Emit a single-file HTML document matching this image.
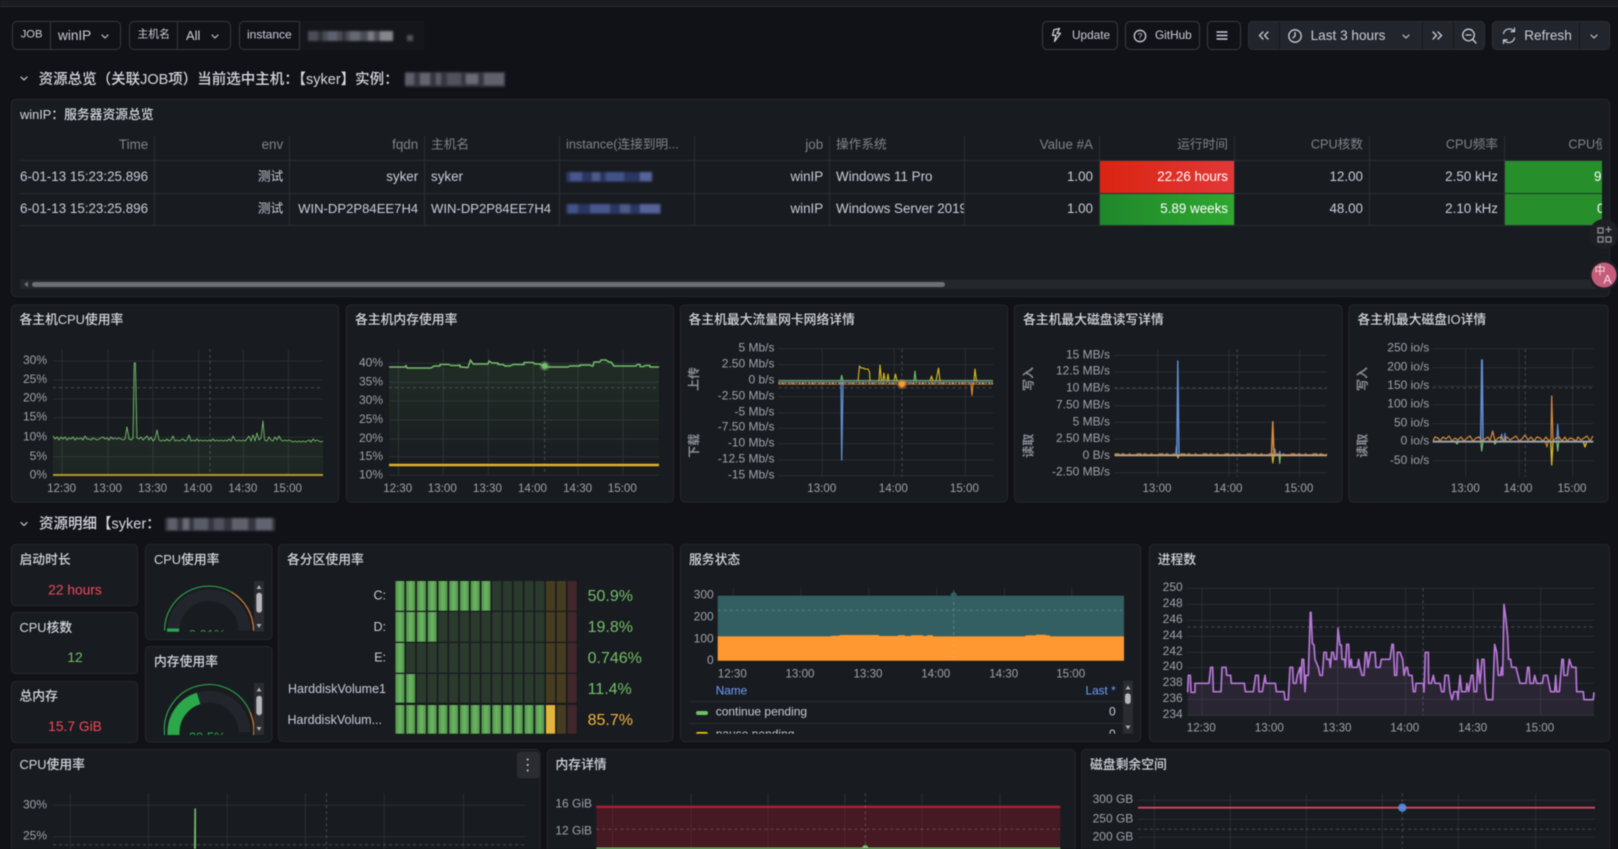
<!DOCTYPE html>
<html lang="zh"><head><meta charset="utf-8"><title>winIP</title>
<style>
html,body{margin:0;padding:0;background:#111217;width:1618px;height:849px;overflow:hidden}
svg{display:block;filter:blur(.4px)}
text{font-family:"Liberation Sans","Noto Sans CJK SC",sans-serif;dominant-baseline:central;fill:#ccccdc}
.ti{font-size:12.8px;font-weight:500;fill:#d8d9e2}
.sec{font-size:14.5px;font-weight:500;fill:#d8d9e2}
.y{font-size:12px;fill:#a2a2ad;text-anchor:end}
.x{font-size:11.6px;fill:#a2a2ad;text-anchor:middle}
.c{font-size:13.4px;fill:#ccccdc}
.cz{font-size:12.7px}
.r{text-anchor:end}
.h{font-size:13.4px;fill:#82838d}
.hz{font-size:12.7px}
.rot{font-size:12px;font-weight:700;fill:#8b8b96;text-anchor:middle}
.p{fill:#181b1f;stroke:#25272d;stroke-width:1}
.g{fill:none;stroke:rgba(204,204,220,.11);stroke-width:1}
.d{fill:none;stroke:rgba(204,204,220,.26);stroke-width:1;stroke-dasharray:3 3}
.l{fill:none;stroke-linejoin:round}
.ic{fill:none;stroke:#ccccdc;stroke-width:1.3;stroke-linecap:round;stroke-linejoin:round}
.bar{font-size:12.5px;fill:#ccccdc;text-anchor:end}
.val{font-size:16px;fill:#73bf69}
</style></head><body>
<svg width="1618" height="849" viewBox="0 0 1618 849" xmlns="http://www.w3.org/2000/svg">
<defs>
<filter id="bl" x="-5%" y="-30%" width="110%" height="160%"><feGaussianBlur stdDeviation="1"/></filter>
<linearGradient id="red" x1="0" x2="1"><stop offset="0" stop-color="#db2412"/><stop offset="1" stop-color="#e23838"/></linearGradient>
<linearGradient id="grn" x1="0" x2="1"><stop offset="0" stop-color="#1f872c"/><stop offset="1" stop-color="#2fa730"/></linearGradient>
<linearGradient id="seg" x1="0" x2="1"><stop offset="0" stop-color="#4d9247"/><stop offset=".5" stop-color="#6db564"/><stop offset="1" stop-color="#4d9247"/></linearGradient>
<linearGradient id="fa" x1="0" x2="0" y1="0" y2="1"><stop offset="0" stop-color="#73bf69" stop-opacity=".1"/><stop offset="1" stop-color="#73bf69" stop-opacity=".07"/></linearGradient>
<linearGradient id="fb" x1="0" x2="0" y1="0" y2="1"><stop offset="0" stop-color="#73bf69" stop-opacity=".11"/><stop offset="1" stop-color="#73bf69" stop-opacity="0"/></linearGradient>
<pattern id="lit" patternUnits="userSpaceOnUse" x="395.3" y="0" width="10.76" height="10"><rect width="9.2" height="10" fill="url(#seg)"/></pattern>
<clipPath id="cols">
<rect x="395.3" y="570" width="9.2" height="170" rx="1.5"/><rect x="406.06" y="570" width="9.2" height="170" rx="1.5"/><rect x="416.82" y="570" width="9.2" height="170" rx="1.5"/><rect x="427.58" y="570" width="9.2" height="170" rx="1.5"/><rect x="438.34" y="570" width="9.2" height="170" rx="1.5"/><rect x="449.1" y="570" width="9.2" height="170" rx="1.5"/><rect x="459.86" y="570" width="9.2" height="170" rx="1.5"/><rect x="470.62" y="570" width="9.2" height="170" rx="1.5"/><rect x="481.38" y="570" width="9.2" height="170" rx="1.5"/><rect x="492.14" y="570" width="9.2" height="170" rx="1.5"/><rect x="502.9" y="570" width="9.2" height="170" rx="1.5"/><rect x="513.66" y="570" width="9.2" height="170" rx="1.5"/><rect x="524.42" y="570" width="9.2" height="170" rx="1.5"/><rect x="535.18" y="570" width="9.2" height="170" rx="1.5"/><rect x="545.94" y="570" width="9.2" height="170" rx="1.5"/><rect x="556.7" y="570" width="9.2" height="170" rx="1.5"/><rect x="567.46" y="570" width="9.2" height="170" rx="1.5"/>
</clipPath>
<clipPath id="tb"><rect x="20" y="130" width="1582" height="100"/></clipPath>
<clipPath id="os"><rect x="830" y="160" width="134" height="70"/></clipPath>
<clipPath id="g1"><rect x="155" y="575" width="99" height="56.7"/></clipPath>
<clipPath id="g2"><rect x="155" y="680" width="99" height="55"/></clipPath>
<clipPath id="leg"><rect x="689" y="680" width="434" height="53.6"/></clipPath>
</defs>
<rect width="1618" height="849" fill="#111217"/>
<rect width="1618" height="6" fill="#1a1c22"/><rect y="6" width="1618" height="1" fill="#2b2d33"/>

<!-- variables -->
<rect x="12.5" y="21.5" width="108" height="28" rx="4.5" fill="#111217" stroke="#35373e"/><path d="M50.5 22V49M177.5 22V49M299.5 22V49" stroke="#35373e"/>
<text x="20.7" y="34.6" font-size="11.2" fill="#ccccdc" style="font-weight:500">JOB</text>
<text x="58" y="35.5" font-size="13.6">winIP</text>
<path class="ic" d="M102 35l3 3 3-3" style="stroke-width:1.1"/>
<rect x="129.5" y="21.5" width="101" height="28" rx="4.5" fill="none" stroke="#35373e"/>
<text x="137.5" y="34.6" font-size="10.8">主机名</text>
<text x="186" y="35.5" font-size="13">All</text>
<path class="ic" d="M212 35l3 3 3-3" style="stroke-width:1.1"/>
<rect x="239.5" y="21.5" width="184" height="28" rx="4.5" fill="none" stroke="#35373e"/>
<text x="247" y="34.4" font-size="12">instance</text>
<rect x="300" y="21" width="124" height="29" fill="#14161b"/>
<g filter="url(#bl)"><rect x="308" y="31" width="85" height="10" fill="#4b4d57"/><rect x="318" y="31" width="5" height="10" fill="#2e3039"/><rect x="328" y="31" width="9" height="10" fill="#5d6070"/><rect x="342" y="31" width="4" height="10" fill="#30323b"/><rect x="350" y="31" width="10" height="10" fill="#666873"/><rect x="368" y="31" width="6" height="10" fill="#7a7b82"/><rect x="380" y="31" width="13" height="10" fill="#85868c"/><rect x="407" y="35" width="6" height="6" fill="#50525a"/></g>

<!-- toolbar -->
<rect x="1042.5" y="21.5" width="75" height="28" rx="4.5" fill="none" stroke="#3a3c43"/>
<path class="ic" d="M1059.5 28.5l-5.5 1.2-1.5 5.8 3.4-.3-1.4 6.3 6-8.2-3.6.1z"/>
<text x="1072" y="35" font-size="11.8" style="font-weight:500">Update</text>
<rect x="1125.5" y="21.5" width="74" height="28" rx="4.5" fill="none" stroke="#3a3c43"/>
<circle class="ic" cx="1140" cy="36" r="5.7"/><text x="1140" y="35.8" font-size="8.5" text-anchor="middle">?</text>
<text x="1155" y="35" font-size="11.8" style="font-weight:500">GitHub</text>
<rect x="1207.5" y="21.5" width="33" height="28" rx="4.5" fill="none" stroke="#3a3c43"/>
<path class="ic" d="M1216.5 32H1227.5M1216.5 35.5H1227.5M1216.5 39H1227.5" style="stroke-width:1.5;stroke-linecap:butt"/>
<rect x="1248.5" y="21.5" width="236" height="28" rx="4" fill="#22252b" stroke="#2d2f36"/>
<path d="M1279.5 22V49M1422.5 22V49M1453.5 22V49" stroke="#16181c"/>
<path class="ic" d="M1263 32l-3.5 3.5 3.5 3.5M1268 32l-3.5 3.5 3.5 3.5M1438 32l3.5 3.5-3.5 3.5M1433 32l3.5 3.5-3.5 3.5"/>
<circle class="ic" cx="1295" cy="36" r="6.2"/><path class="ic" d="M1295 32.5V36l-2 1.8"/>
<text x="1310.6" y="35.5" font-size="13.6">Last 3 hours</text>
<path class="ic" d="M1403 35l3 3 3-3" style="stroke-width:1.1"/>
<circle class="ic" cx="1468.5" cy="35" r="5.8"/><path class="ic" d="M1466 35H1471M1472.8 39.5L1476 43"/>
<rect x="1492.5" y="21.5" width="117" height="28" rx="4" fill="#22252b" stroke="#2d2f36"/>
<path d="M1579.5 22V49" stroke="#16181c"/>
<path class="ic" d="M1503.5 33.5a6 6 0 0 1 10.5-2.3M1514.5 38a6 6 0 0 1-10.5 2.3M1514.5 28v3.6h-3.6M1503.5 43.5v-3.6h3.6" style="stroke-width:1.2"/>
<text x="1524.2" y="35.5" font-size="13.6">Refresh</text>
<path class="ic" d="M1591 35l3 3 3-3" style="stroke-width:1.1"/>

<!-- section 1 -->
<path class="ic" d="M21 77l3 3 3-3" style="stroke-width:1.2"/>
<text class="sec" x="38.6" y="79.8">资源总览（关联JOB项）当前选中主机：【syker】实例：</text>
<g filter="url(#bl)"><rect x="405" y="72" width="100" height="15" fill="#34363f"/><rect x="405" y="73" width="9" height="12" fill="#5d5f6a"/><rect x="420" y="73" width="10" height="12" fill="#62646f"/><rect x="436" y="73" width="5" height="12" fill="#595b66"/><rect x="447" y="73" width="14" height="12" fill="#4f515c"/><rect x="466" y="74" width="12" height="10" fill="#696b74"/><rect x="484" y="73" width="20" height="12" fill="#5f616a"/></g>

<!-- table panel -->
<rect class="p" x="11.5" y="99.5" width="1598" height="197" rx="4"/>
<text class="ti" x="20" y="114.5">winIP：服务器资源总览</text>
<g clip-path="url(#tb)">
<rect x="1099.6" y="160.8" width="134.4" height="32.2" fill="url(#red)"/>
<rect x="1099.6" y="193.6" width="134.4" height="31.6" fill="url(#grn)"/>
<rect x="1504.5" y="160.8" width="98" height="32.2" fill="#268f2c"/>
<rect x="1504.5" y="193.6" width="98" height="31.6" fill="#268f2c"/>
<path d="M154.5 136V225M289.5 136V225M424.5 136V225M559.5 136V225M694.5 136V225M829.5 136V225M964.5 136V225M1099.5 136V225M1234.5 136V225M1369.5 136V225M1504.5 136V225M20 160.5H1602M20 193.5H1602M20 225.5H1602" stroke="#2c2e34"/>
<text class="h r" x="148.2" y="144.7">Time</text><text class="h r" x="283.2" y="144.7">env</text><text class="h r" x="418.2" y="144.7">fqdn</text><text class="h hz" x="431" y="144.7">主机名</text><text class="h hz" x="566" y="144.7">instance(连接到明...</text><text class="h r" x="823.2" y="144.7">job</text><text class="h hz" x="836" y="144.7">操作系统</text><text class="h r" x="1093" y="144.7">Value #A</text><text class="h hz r" x="1228" y="144.7">运行时间</text><text class="h hz r" x="1363" y="144.7">CPU核数</text><text class="h hz r" x="1498" y="144.7">CPU频率</text><text class="h hz" x="1568.4" y="144.7">CPU使用率</text>
<text class="c" x="20" y="176.7">6-01-13 15:23:25.896</text><text class="c cz r" x="283.2" y="176.7">测试</text><text class="c r" x="418.2" y="176.7">syker</text><text class="c" x="431" y="176.7">syker</text><text class="c r" x="823.2" y="176.7">winIP</text><text class="c r" x="1093" y="176.7">1.00</text><text class="c r" x="1228" y="176.7" style="fill:#fff">22.26 hours</text><text class="c r" x="1363" y="176.7">12.00</text><text class="c r" x="1498" y="176.7">2.50 kHz</text><text class="c" x="1594" y="176.7" style="fill:#fff">9</text>
<text class="c" x="20" y="208.3">6-01-13 15:23:25.896</text><text class="c cz r" x="283.2" y="208.3">测试</text><text class="c r" x="418.2" y="208.3" style="font-size:13.1px">WIN-DP2P84EE7H4</text><text class="c" x="431" y="208.3" style="font-size:13.1px">WIN-DP2P84EE7H4</text><text class="c r" x="823.2" y="208.3">winIP</text><text class="c r" x="1093" y="208.3">1.00</text><text class="c r" x="1228" y="208.3" style="fill:#fff">5.89 weeks</text><text class="c r" x="1363" y="208.3">48.00</text><text class="c r" x="1498" y="208.3">2.10 kHz</text><text class="c" x="1597" y="208.3" style="fill:#fff">0</text>
<g clip-path="url(#os)"><text class="c" x="836" y="176.7">Windows 11 Pro</text><text class="c" x="836" y="208.3">Windows Server 2019</text></g>
</g>
<g filter="url(#bl)"><rect x="566" y="172" width="86" height="10" fill="#2a3560"/><rect x="570" y="172" width="12" height="9" fill="#46568e"/><rect x="592" y="172" width="8" height="9" fill="#4c5a88"/><rect x="606" y="172" width="18" height="9" fill="#425288"/><rect x="640" y="172" width="12" height="9" fill="#54649a"/>
<rect x="566" y="204" width="95" height="10" fill="#2a3560"/><rect x="568" y="204" width="10" height="9" fill="#425288"/><rect x="590" y="204" width="20" height="9" fill="#46568e"/><rect x="620" y="204" width="10" height="9" fill="#4c5a88"/><rect x="640" y="204" width="20" height="9" fill="#54649a"/></g>
<rect x="20" y="279.5" width="1582" height="9.5" fill="#24272c"/>
<rect x="32" y="282" width="913" height="5" rx="2.5" fill="#6c6f74"/>
<path d="M28 281.5L24 284.3 28 287z" fill="#6c6f74"/>
<circle cx="1604" cy="234" r="15" fill="#1d1f24"/>
<g fill="none" stroke="#8f9199" stroke-width="1.3"><rect x="1598" y="228" width="5" height="5"/><rect x="1598" y="237" width="5" height="5"/><rect x="1606" y="237" width="5" height="5"/><path d="M1608.5 226.5v6M1605.5 229.5h6"/></g>
<circle cx="1604" cy="275" r="15" fill="#1d1f24"/><circle cx="1604" cy="275" r="12.5" fill="#c55c7b"/>
<text x="1600" y="271" font-size="11" text-anchor="middle" style="fill:#f3dfe5">中</text><text x="1607.5" y="279.5" font-size="12" text-anchor="middle" style="fill:#f3dfe5">A</text>

<!-- row of 5 panels -->
<rect class="p" x="11.5" y="305" width="327" height="197" rx="4"/>
<rect class="p" x="346.5" y="305" width="327" height="197" rx="4"/>
<rect class="p" x="680.5" y="305" width="327" height="197" rx="4"/>
<rect class="p" x="1014.5" y="305" width="327.5" height="197" rx="4"/>
<rect class="p" x="1349" y="305" width="259" height="197" rx="4"/>
<text class="ti" x="19.5" y="319.7">各主机CPU使用率</text>
<text class="ti" x="355" y="319.7">各主机内存使用率</text>
<text class="ti" x="688.5" y="319.7">各主机最大流量网卡网络详情</text>
<text class="ti" x="1023" y="319.7">各主机最大磁盘读写详情</text>
<text class="ti" x="1357.5" y="319.7">各主机最大磁盘IO详情</text>

<!-- chart A -->
<path class="g" d="M53 361H323M53 380H323M53 399H323M53 417.7H323M53 437.3H323M53 456.7H323M53 475H323M62 349V475M108 349V475M153 349V475M198.6 349V475M243.3 349V475M288.4 349V475"/>
<path d="M53 437L134 437L134 363H136L137 438L200 440L323 441V475H53Z" fill="url(#fa)"/>
<path class="d" d="M53 387.7H323M210 349V475"/>
<path class="l" stroke="#73bf69" stroke-width=".9" d="M53 436L55 439 57 437 59 440 61 437 63 439 65 437 67 440 69 438 71 439 73 437 75 440 77 438 79 439 81 438 83 440 85 436 87 439 89 439 91 440 93 438 95 439 97 440 99 439 101 438 103 437 105 439 107 438 109 440 111 437 113 439 115 438 117 439 119 438 121 439 123 440 125 439 127 427 129 439 131 440 133 438 134.2 363 135.4 363 137 438 139 439 141 437 143 440 145 438 147 436 149 440 151 437 153 441 155 439 157 430 159 440 161 441 163 440 165 441 167 439 169 441 171 440 173 436 175 441 177 440 179 441 181 440 183 439 185 441 187 440 189 435 191 441 193 440 195 441 197 439 199 441 201 440 203 441 205 440 207 441 209 440 211 441 213 439 215 441 217 440 219 441 221 440 223 441 225 440 227 441 229 439 231 441 233 436 235 440 237 441 239 440 241 441 243 440 245 441 247 439 249 436 251 441 253 435 255 441 257 433 259 440 261 438 263 421 264.5 440 267 441 269 437 271 440 273 441 275 437 277 440 279 436 281 440 283 441 285 440 287 441 289 440 291 441 293 442 295 441 297 442 299 441 301 442 303 441 305 442 307 441 309 440 311 442 313 439 315 441 317 440 319 441 321 442 323 441"/>
<path stroke="#b8982a" stroke-width="2" fill="none" d="M53 475H323"/>
<text class="y" x="47" y="360">30%</text><text class="y" x="47" y="379">25%</text><text class="y" x="47" y="397.7">20%</text><text class="y" x="47" y="416.7">15%</text><text class="y" x="47" y="436.3">10%</text><text class="y" x="47" y="456">5%</text><text class="y" x="47" y="474.7">0%</text>
<text class="x" x="61.6" y="488.3">12:30</text><text class="x" x="107.5" y="488.3">13:00</text><text class="x" x="152.6" y="488.3">13:30</text><text class="x" x="197.7" y="488.3">14:00</text><text class="x" x="242.8" y="488.3">14:30</text><text class="x" x="287.5" y="488.3">15:00</text>

<!-- chart B -->
<path class="g" d="M389 363.3H659M389 382.3H659M389 401H659M389 420H659M389 439H659M389 456.7H659M389 475.3H659M398.5 349V475M443.2 349V475M488.3 349V475M533.4 349V475M578 349V475M623 349V475"/>
<path d="M389 367H470L473 364H600L606 360L614 366H659V475H389Z" fill="url(#fb)"/>
<path class="d" d="M389 387.7H659M544.7 349V475"/>
<path class="l" stroke="#73bf69" stroke-width="1.5" d="M389 367H405L406 365.5 407 368H431L434 366H440V364.5H449L451 365.5H458L460 365V367H463L466 367.5H468L470.5 360 473 364H488L489 361 492 363H498V364.5H503L505 366H510L513 364.5H524V362.5H533L535 364H540L544 367H568L570 366H580V365H590L592 366H593L594 362H600L601 360H606L609 362H611L614 366H636L637 364.5H640V366.5H644L645 365.5H650V367H659"/>
<circle cx="544.7" cy="366" r="5" fill="#73bf69" fill-opacity=".35"/><circle cx="544.7" cy="366" r="3" fill="#73bf69"/>
<path stroke="#dcb52a" stroke-width="2.4" fill="none" d="M389 465H659"/>
<text class="y" x="383" y="362.7">40%</text><text class="y" x="383" y="381.7">35%</text><text class="y" x="383" y="400">30%</text><text class="y" x="383" y="419">25%</text><text class="y" x="383" y="438">20%</text><text class="y" x="383" y="456">15%</text><text class="y" x="383" y="474.7">10%</text>
<text class="x" x="397.7" y="488.3">12:30</text><text class="x" x="442.3" y="488.3">13:00</text><text class="x" x="487.4" y="488.3">13:30</text><text class="x" x="532.5" y="488.3">14:00</text><text class="x" x="577.6" y="488.3">14:30</text><text class="x" x="622.3" y="488.3">15:00</text>

<!-- chart C -->
<path class="g" d="M778.4 348.7H993M778.4 364.7H993M778.4 380.3H993M778.4 396.7H993M778.4 413H993M778.4 428.3H993M778.4 443.7H993M778.4 460H993M778.4 475.7H993M822.2 349.3V476.7M894.2 349.3V476.7M965.3 349.3V476.7"/>
<path class="d" d="M778.4 387.7H993M902 349.3V476.7"/>
<path class="l" stroke="#73bf69" stroke-width="1.2" stroke-opacity=".75" d="M778.4 380.5H993"/>
<path class="l" stroke="#7f9fc0" stroke-width="1" stroke-opacity=".7" d="M778.4 381.8H993"/>
<path class="l" stroke="#d9bd20" stroke-width="1.1" d="M858 381L859.5 366 861 368H864V369H868L869.5 372 870 381M879 381L880 365 881.5 381M883 381L883.8 373 885 380M887 381L888 374 889 381M894 381L895.5 374 897 381M930 381L931.5 376 933 381M936 381L938.5 368 940 381M974 381L975 369 976.5 381"/>
<path class="l" stroke="#73bf69" stroke-width="1.1" d="M914 381L915 371 916 381M840.5 381L841.7 375.3 843 381"/>
<path class="l" stroke="#d98a3c" stroke-width="1.2" stroke-dasharray="2 1 3 1 1 2" d="M778.4 383.4H993"/>
<path class="l" stroke="#c9843c" stroke-width=".7" d="M778.4 384.3H993"/>
<path class="l" stroke="#cccc99" stroke-width=".7" stroke-dasharray="1 2" d="M778.4 382.6H993"/>
<path class="l" stroke="#e08c38" stroke-width="1.1" d="M971 384L972 395.3 973 384"/>
<path class="l" stroke="#5f8fd6" stroke-width="1.3" d="M841 382L841.7 460 843 382"/>
<circle cx="902" cy="384.3" r="5" fill="#ff9830" fill-opacity=".35"/><circle cx="902" cy="384.3" r="3" fill="#ff9830"/>
<text class="y" x="774.5" y="347.7">5 Mb/s</text><text class="y" x="774.5" y="363.3">2.50 Mb/s</text><text class="y" x="774.5" y="379.7">0 b/s</text><text class="y" x="774.5" y="395.7">-2.50 Mb/s</text><text class="y" x="774.5" y="411.7">-5 Mb/s</text><text class="y" x="774.5" y="426.7">-7.50 Mb/s</text><text class="y" x="774.5" y="442.7">-10 Mb/s</text><text class="y" x="774.5" y="458.7">-12.5 Mb/s</text><text class="y" x="774.5" y="474.7">-15 Mb/s</text>
<text class="x" x="821.8" y="488.3">13:00</text><text class="x" x="893.3" y="488.3">14:00</text><text class="x" x="964.4" y="488.3">15:00</text>
<text class="rot" transform="translate(694,379) rotate(-90)">上传</text><text class="rot" transform="translate(694,445.7) rotate(-90)">下载</text>

<!-- chart D -->
<path class="g" d="M1114.5 355.3H1327M1114.5 372H1327M1114.5 388.7H1327M1114.5 405.7H1327M1114.5 422.3H1327M1114.5 439H1327M1114.5 455.3H1327M1114.5 472.7H1327M1157.9 349.3V476.7M1229 349.3V476.7M1299.7 349.3V476.7"/>
<path class="d" d="M1114.5 387.7H1327M1237.2 349.3V476.7"/>
<path class="l" stroke="#5f8fd6" stroke-width="1" d="M1175.5 455L1176.3 446 1177 455"/>
<path class="l" stroke="#5f8fd6" stroke-width="1.4" d="M1176.8 455L1177.8 361 1179 455"/>
<path class="l" stroke="#5f8fd6" stroke-width="1" d="M1274 455L1275 449 1276 455M1279 455L1279.7 451 1280.5 455"/>
<path class="l" stroke="#d9bd20" stroke-width="1.1" d="M1272 455L1272.8 463 1274 455M1177 455L1178 458 1179 455"/>
<path class="l" stroke="#73bf69" stroke-width="1.1" d="M1279 455L1279.7 463.5 1280.5 455"/>
<path class="l" stroke="#d98a3c" stroke-width="1.5" d="M1271.5 455L1272.8 421.7 1274 455"/>
<path class="l" stroke="#c9a27a" stroke-width="2" d="M1114.5 455.3H1327"/>
<path class="l" stroke="#c0843e" stroke-width="1" stroke-dasharray="5 2 3 4 2 6" d="M1114.5 453.8H1327"/>
<text class="y" x="1110" y="354.3">15 MB/s</text><text class="y" x="1110" y="370.7">12.5 MB/s</text><text class="y" x="1110" y="387.7">10 MB/s</text><text class="y" x="1110" y="404.7">7.50 MB/s</text><text class="y" x="1110" y="421.7">5 MB/s</text><text class="y" x="1110" y="438">2.50 MB/s</text><text class="y" x="1110" y="455">0 B/s</text><text class="y" x="1110" y="471.7">-2.50 MB/s</text>
<text class="x" x="1157" y="488.3">13:00</text><text class="x" x="1228" y="488.3">14:00</text><text class="x" x="1298.8" y="488.3">15:00</text>
<text class="rot" transform="translate(1028.6,379) rotate(-90)">写入</text><text class="rot" transform="translate(1028.6,445.7) rotate(-90)">读取</text>

<!-- chart E -->
<path class="g" d="M1432.7 348.7H1593.3M1432.7 367.7H1593.3M1432.7 386H1593.3M1432.7 404.7H1593.3M1432.7 423.7H1593.3M1432.7 441.7H1593.3M1432.7 460.7H1593.3M1465.7 349.3V476.7M1519 349.3V476.7M1572.7 349.3V476.7"/>
<path class="d" d="M1432.7 387.7H1593.3M1525.3 349.3V476.7"/>
<path class="l" stroke="#5f8fd6" stroke-width="1.5" d="M1480.7 441L1481.7 360H1482.2L1483 441"/>
<path class="l" stroke="#5f8fd6" stroke-width="1.2" d="M1500.5 441L1501.7 434 1503 441M1504 441L1505 433.5 1506 441M1556.7 441L1557.7 424.3 1558.8 441"/>
<path class="l" stroke="#73bf69" stroke-width="1.2" d="M1480.7 441L1481.7 451 1483 441M1556.7 441L1557.7 451 1558.8 441M1455 441L1457 444 1459 441M1493 441L1495 444 1497 441"/>
<path class="l" stroke="#d9bd20" stroke-width="1.3" d="M1550.7 441L1551.7 465 1553 441M1583 441L1585 447 1587 441"/>
<path class="l" stroke="#d98a3c" stroke-width="1" d="M1545 441L1547 447 1548 441"/>
<path class="l" stroke="#97a4b2" stroke-width="2" d="M1432.7 441.6H1593.3"/>
<path class="l" stroke="#d98a3c" stroke-width="1.2" d="M1433 441L1435 437 1438 438 1440 441 1443 437 1446 439 1449 436 1452 441 1455 438 1458 440 1461 437 1464 441 1467 438 1470 436 1473 441 1476 438 1479 437 1482 441 1485 439 1488 437 1490 441 1492.7 431 1495 441 1498 438 1501 437 1504 441 1507 437 1510 440 1513 438 1516 436 1519 441 1522 439 1525 435 1528 440 1531 437 1534 441 1537 437 1540 438 1543 441 1546 437 1549 441 1551 439 1551.7 396 1553 441 1556 438 1559 437 1562 441 1565 437 1567 441 1570 438 1573 439 1576 441 1578 437 1581 440 1584 438 1587 436 1590 441 1593 436"/>
<text class="y" x="1429.3" y="347.7">250 io/s</text><text class="y" x="1429.3" y="366.7">200 io/s</text><text class="y" x="1429.3" y="385">150 io/s</text><text class="y" x="1429.3" y="403.7">100 io/s</text><text class="y" x="1429.3" y="422.7">50 io/s</text><text class="y" x="1429.3" y="440.7">0 io/s</text><text class="y" x="1429.3" y="460">-50 io/s</text>
<text class="x" x="1465.3" y="488.3">13:00</text><text class="x" x="1518" y="488.3">14:00</text><text class="x" x="1572" y="488.3">15:00</text>
<text class="rot" transform="translate(1362.7,379) rotate(-90)">写入</text><text class="rot" transform="translate(1362.7,445.7) rotate(-90)">读取</text>

<!-- section 2 -->
<path class="ic" d="M21 522.5l3 3 3-3" style="stroke-width:1.2"/>
<text class="sec" x="39" y="524.5">资源明细【syker：</text>
<g filter="url(#bl)"><rect x="165" y="518" width="110" height="13" fill="#34363f"/><rect x="168" y="518" width="9" height="12" fill="#5d5f6a"/><rect x="183" y="518" width="6" height="12" fill="#696b74"/><rect x="194" y="518" width="14" height="12" fill="#595b66"/><rect x="214" y="518" width="10" height="12" fill="#4f515c"/><rect x="232" y="518" width="16" height="12" fill="#5f616a"/><rect x="256" y="518" width="16" height="12" fill="#62646f"/></g>

<rect class="p" x="11.5" y="544.5" width="126" height="61" rx="4"/>
<rect class="p" x="11.5" y="612.5" width="126" height="61" rx="4"/>
<rect class="p" x="11.5" y="681.5" width="126" height="61" rx="4"/>
<text class="ti" x="19.5" y="559.3">启动时长</text><text x="75" y="589.8" font-size="13.8" text-anchor="middle" style="fill:#f2495c;font-weight:500">22 hours</text>
<text class="ti" x="19.5" y="627.3">CPU核数</text><text x="75" y="657.5" font-size="13.8" text-anchor="middle" style="fill:#73bf69;font-weight:500">12</text>
<text class="ti" x="19.5" y="696">总内存</text><text x="75" y="726.5" font-size="13.8" text-anchor="middle" style="fill:#f2495c;font-weight:500">15.7 GiB</text>

<!-- gauges -->
<rect class="p" x="145.5" y="544.5" width="126.5" height="95" rx="4"/>
<text class="ti" x="154" y="559.3">CPU使用率</text>
<g clip-path="url(#g1)">
<path d="M173.5 630.6A35.5 35.5 0 0 1 244.5 630.6" fill="none" stroke="#22252b" stroke-width="12"/>
<rect x="167" y="628.5" width="12" height="4" fill="#2ba84a"/>
<path d="M164.5 630.6A44.5 44.5 0 0 1 231.25 592" fill="none" stroke="#2f9e4a" stroke-width="1.2"/>
<path d="M231.25 592A44.5 44.5 0 0 1 253.5 630.6" fill="none" stroke="#d9812f" stroke-width="1.2"/>
<text x="207.3" y="634.5" font-size="13" text-anchor="middle" style="fill:#2ba84a">9.91%</text>
</g>
<rect x="254" y="581" width="10" height="50.7" fill="#2a2c30"/>
<rect x="256.3" y="592.7" width="5.7" height="20" rx="2.8" fill="#b5b6ba"/>
<path d="M259 585L256.5 589H261.5ZM259 628L256.5 624H261.5Z" fill="#aaaab0"/>

<rect class="p" x="145.5" y="646.5" width="126.5" height="95.5" rx="4"/>
<text class="ti" x="154" y="661.7">内存使用率</text>
<g clip-path="url(#g2)">
<path d="M173.5 732.3A35.5 35.5 0 0 1 244.5 732.3" fill="none" stroke="#22252b" stroke-width="12"/>
<path d="M173.5 735V732.3A35.5 35.5 0 0 1 198.6 698.4" fill="none" stroke="#2ba84a" stroke-width="12"/>
<path d="M164.5 735V732.3A44.5 44.5 0 0 1 250 712" fill="none" stroke="#2f9e4a" stroke-width="1.2"/>
<path d="M250 712A44.5 44.5 0 0 1 253.5 735" fill="none" stroke="#d9812f" stroke-width="1.2"/>
<text x="207.3" y="737" font-size="13" text-anchor="middle" style="fill:#2ba84a">39.5%</text>
</g>
<rect x="254" y="683" width="10" height="52" fill="#2a2c30"/>
<rect x="256.3" y="695.7" width="5.7" height="19.5" rx="2.8" fill="#b5b6ba"/>
<path d="M259 687.5L256.5 691.5H261.5ZM259 731L256.5 727H261.5Z" fill="#aaaab0"/>

<!-- bar gauge -->
<rect class="p" x="278.5" y="544.5" width="394.5" height="197" rx="4"/>
<text class="ti" x="287" y="559.3">各分区使用率</text>
<g clip-path="url(#cols)">
<g fill="#2a3a2c"><rect x="395" y="581" width="151" height="29.7"/><rect x="395" y="612" width="151" height="29.7"/><rect x="395" y="643" width="151" height="29.7"/><rect x="395" y="674" width="151" height="28.7"/></g>
<g fill="#463c20"><rect x="545.9" y="581" width="21.5" height="29.7"/><rect x="545.9" y="612" width="21.5" height="29.7"/><rect x="545.9" y="643" width="21.5" height="29.7"/><rect x="545.9" y="674" width="21.5" height="28.7"/><rect x="556" y="705" width="11.4" height="28.7"/></g>
<g fill="#41262b"><rect x="567.4" y="581" width="11" height="29.7"/><rect x="567.4" y="612" width="11" height="29.7"/><rect x="567.4" y="643" width="11" height="29.7"/><rect x="567.4" y="674" width="11" height="28.7"/><rect x="567.4" y="705" width="11" height="28.7"/></g>
<g fill="url(#lit)"><rect x="395" y="581" width="96" height="29.7"/><rect x="395" y="612" width="42" height="29.7"/><rect x="395" y="643" width="10" height="29.7"/><rect x="395" y="674" width="21" height="28.7"/><rect x="395" y="705" width="150" height="28.7"/></g>
<rect x="545.9" y="705" width="10" height="28.7" fill="#e3b43a"/>
</g>
<text class="bar" x="386" y="595.7">C:</text><text class="bar" x="386" y="627">D:</text><text class="bar" x="386" y="657.7">E:</text><text class="bar" x="386" y="689">HarddiskVolume1</text><text class="bar" x="382" y="720">HarddiskVolum...</text>
<text class="val" x="587.6" y="596.5">50.9%</text><text class="val" x="587.6" y="627.7">19.8%</text><text class="val" x="587.6" y="658.5">0.746%</text><text class="val" x="587.6" y="689.7">11.4%</text><text class="val" x="587.6" y="720.7" style="fill:#f5b53f">85.7%</text>

<!-- service -->
<rect class="p" x="680.5" y="544.5" width="460" height="197" rx="4"/>
<text class="ti" x="689" y="559.3">服务状态</text>
<path class="g" d="M733.3 588V596M801 588V596M868.7 588V596M936.7 588V596M1004.3 588V596M1071.7 588V596"/>
<rect x="717.7" y="595.7" width="406.3" height="41.5" fill="#335f63"/>
<path d="M717.7 636.4H830L832 635.8H838L841 635H878L880 636H898V635.2H905V636H911V635.2H923V636H927V635.2H933V636.4H1025L1026 635.4H1036V634.8H1046V635.4H1050V636.4H1124V660.7H717.7Z" fill="#ff9830"/>
<path class="d" d="M717.7 610.3H1124M953.7 590V660.7"/>
<circle cx="953.7" cy="595" r="3" fill="#335f63"/>
<text class="y" x="713.7" y="594.5">300</text><text class="y" x="713.7" y="616.7">200</text><text class="y" x="713.7" y="638.3">100</text><text class="y" x="713.7" y="660">0</text>
<text class="x" x="732.3" y="674.2">12:30</text><text class="x" x="800" y="674.2">13:00</text><text class="x" x="868" y="674.2">13:30</text><text class="x" x="935.7" y="674.2">14:00</text><text class="x" x="1003.7" y="674.2">14:30</text><text class="x" x="1070.7" y="674.2">15:00</text>
<g clip-path="url(#leg)">
<text x="715.7" y="690.3" font-size="11.8" style="fill:#6e9fff;font-weight:500">Name</text><text x="1115.7" y="690.3" font-size="11.8" text-anchor="end" style="fill:#6e9fff;font-weight:500">Last *</text>
<path d="M689 701.5H1122.7M689 723.5H1122.7" stroke="#2c2e34"/>
<rect x="696" y="711" width="12" height="4" rx="2" fill="#73bf69"/>
<text x="715.7" y="711.3" font-size="12">continue pending</text><text x="1115.7" y="711.3" font-size="12" text-anchor="end">0</text>
<rect x="696" y="732" width="12" height="4" rx="2" fill="#f2cc0c"/>
<text x="715.7" y="733.8" font-size="12">pause pending</text><text x="1115.7" y="733.8" font-size="12" text-anchor="end">0</text>
</g>
<rect x="1123" y="680.7" width="10" height="53" fill="#2a2c30"/>
<rect x="1125" y="693.3" width="5.7" height="10.7" rx="2.8" fill="#b5b6ba"/>
<path d="M1128 685.5L1125.5 689.5H1130.5ZM1128 729.5L1125.5 725.5H1130.5Z" fill="#aaaab0"/>

<!-- processes -->
<rect class="p" x="1149.5" y="544.5" width="460" height="197" rx="4"/>
<text class="ti" x="1157.7" y="559.3">进程数</text>
<path class="g" d="M1187.3 588.3H1594M1187.3 604.3H1594M1187.3 620.3H1594M1187.3 636.3H1594M1187.3 652.3H1594M1187.3 667.7H1594M1187.3 683.3H1594M1187.3 699.3H1594M1187.3 715.3H1594M1202 588.3V715.3M1270 588.3V715.3M1337.7 588.3V715.3M1405.7 588.3V715.3M1473.3 588.3V715.3M1540.7 588.3V715.3"/>
<g transform="translate(1140,530) scale(.33333)">
<path fill="#b877d9" fill-opacity=".11" d="M143 487L145 436 151 436 153 487 165 487 165 460 207 460 212 412 218 412 220 485 243 485 246 412 258 412 260 436 272 436 274 460 313 460 316 485 340 485 347 436 355 436 357 485 367 485 375 436 378 460 406 460 409 485 432 485 435 509 445 509 450 412 458 412 460 460 468 460 472 436 480 412 483 460 486 388 491 388 495 485 498 436 505 436 511 247 513 247 517 340 522 345 525 388 535 412 540 436 547 436 552 367 559 367 560 388 568 388 571 412 575 367 580 367 584 388 590 388 594 295 600 345 604 345 606 388 614 388 616 412 620 343 626 343 628 412 634 388 636 412 652 412 656 388 660 412 666 436 672 436 676 367 680 367 684 412 692 367 705 367 708 412 720 412 724 388 750 388 756 343 760 343 764 436 770 436 772 367 780 367 788 388 792 436 798 412 802 412 806 436 816 436 820 485 826 485 828 460 850 460 852 485 856 367 865 367 866 460 874 460 880 436 885 460 900 460 905 485 912 485 915 436 925 436 930 485 936 509 942 485 952 485 954 509 960 436 965 485 978 485 981 460 986 485 994 436 999 436 1002 485 1010 485 1013 388 1020 460 1026 388 1032 388 1036 485 1040 509 1058 509 1064 343 1070 367 1075 436 1082 436 1085 412 1088 436 1092 223 1097 260 1103 320 1106 388 1112 388 1115 412 1128 412 1134 436 1140 460 1158 460 1163 412 1167 412 1170 460 1180 460 1184 436 1190 460 1207 460 1211 436 1222 436 1232 485 1244 485 1247 436 1250 485 1258 485 1266 388 1270 388 1272 436 1282 436 1288 388 1296 412 1308 412 1310 485 1330 485 1332 509 1360 509 1362 487V556H143Z"/>
</g>
<path class="d" d="M1187.3 627H1594M1423 588.3V715.3"/>
<g transform="translate(1140,530) scale(.33333)">
<path fill="none" stroke="#b877d9" stroke-width="5" stroke-linejoin="round" d="M143 487L145 436 151 436 153 487 165 487 165 460 207 460 212 412 218 412 220 485 243 485 246 412 258 412 260 436 272 436 274 460 313 460 316 485 340 485 347 436 355 436 357 485 367 485 375 436 378 460 406 460 409 485 432 485 435 509 445 509 450 412 458 412 460 460 468 460 472 436 480 412 483 460 486 388 491 388 495 485 498 436 505 436 511 247 513 247 517 340 522 345 525 388 535 412 540 436 547 436 552 367 559 367 560 388 568 388 571 412 575 367 580 367 584 388 590 388 594 295 600 345 604 345 606 388 614 388 616 412 620 343 626 343 628 412 634 388 636 412 652 412 656 388 660 412 666 436 672 436 676 367 680 367 684 412 692 367 705 367 708 412 720 412 724 388 750 388 756 343 760 343 764 436 770 436 772 367 780 367 788 388 792 436 798 412 802 412 806 436 816 436 820 485 826 485 828 460 850 460 852 485 856 367 865 367 866 460 874 460 880 436 885 460 900 460 905 485 912 485 915 436 925 436 930 485 936 509 942 485 952 485 954 509 960 436 965 485 978 485 981 460 986 485 994 436 999 436 1002 485 1010 485 1013 388 1020 460 1026 388 1032 388 1036 485 1040 509 1058 509 1064 343 1070 367 1075 436 1082 436 1085 412 1088 436 1092 223 1097 260 1103 320 1106 388 1112 388 1115 412 1128 412 1134 436 1140 460 1158 460 1163 412 1167 412 1170 460 1180 460 1184 436 1190 460 1207 460 1211 436 1222 436 1232 485 1244 485 1247 436 1250 485 1258 485 1266 388 1270 388 1272 436 1282 436 1288 388 1296 412 1308 412 1310 485 1330 485 1332 509 1360 509 1362 487"/>
</g>
<text class="y" x="1182.7" y="587">250</text><text class="y" x="1182.7" y="603">248</text><text class="y" x="1182.7" y="619">246</text><text class="y" x="1182.7" y="635">244</text><text class="y" x="1182.7" y="651">242</text><text class="y" x="1182.7" y="666">240</text><text class="y" x="1182.7" y="682">238</text><text class="y" x="1182.7" y="698">236</text><text class="y" x="1182.7" y="714">234</text>
<text class="x" x="1201.3" y="728">12:30</text><text class="x" x="1269.3" y="728">13:00</text><text class="x" x="1337" y="728">13:30</text><text class="x" x="1404.7" y="728">14:00</text><text class="x" x="1472.7" y="728">14:30</text><text class="x" x="1539.7" y="728">15:00</text>

<!-- bottom row -->
<rect class="p" x="11.5" y="749.5" width="528.5" height="110" rx="4"/>
<rect class="p" x="547.5" y="749.5" width="527.5" height="110" rx="4"/>
<rect class="p" x="1081.7" y="749.5" width="528" height="110" rx="4"/>
<text class="ti" x="19.5" y="764.3">CPU使用率</text>
<rect x="517" y="751.7" width="22.5" height="26.6" rx="3" fill="#2a2c32"/>
<circle cx="527.7" cy="759.5" r="1" fill="#ccccdc"/><circle cx="527.7" cy="765" r="1" fill="#ccccdc"/><circle cx="527.7" cy="770.5" r="1" fill="#ccccdc"/>
<path class="g" d="M53 805.3H524.7M53 836.7H524.7M70.2 793.3V849M148.3 793.3V849M227.2 793.3V849M305.3 793.3V849M384.2 793.3V849M463.6 793.3V849"/>
<path class="d" d="M53 844.7H524.7M326.5 793.3V849"/>
<path class="l" stroke="#73bf69" stroke-width="1.2" d="M194.6 849L195 809H195.4V849"/>
<text class="y" x="47" y="804.3">30%</text><text class="y" x="47" y="835.7">25%</text>

<text class="ti" x="555.5" y="764.3">内存详情</text>
<path class="g" d="M596.3 805.5H1060.3M612.7 793.3V849M691 793.3V849M768 793.3V849M845 793.3V849M922 793.3V849M1000 793.3V849"/>
<rect x="596.3" y="807" width="464" height="42" fill="#451a22"/>
<path d="M596.3 807H1060.3" stroke="#c4162a" stroke-width="2"/>
<path d="M612.7 807V849M691 807V849M768 807V849M845 807V849M922 807V849M1000 807V849" stroke="rgba(204,204,220,.08)"/>
<path class="d" d="M596.3 829.3H1060.3M865.3 793.3V849"/>
<path d="M596.3 848.5H1060.3" stroke="#73bf69" stroke-width="2"/>
<circle cx="865.3" cy="848" r="3" fill="#73bf69"/>
<text class="y" x="592" y="803.3">16 GiB</text><text class="y" x="592" y="830.3">12 GiB</text>

<text class="ti" x="1090" y="764.3">磁盘剩余空间</text>
<path class="g" d="M1138 800.3H1595M1138 819.3H1595M1138 837.3H1595M1154.3 793.3V849M1230.3 793.3V849M1306.3 793.3V849M1382.3 793.3V849M1458.3 793.3V849M1535.7 793.3V849"/>
<path class="d" d="M1138 829.3H1595M1402.3 793.3V849"/>
<path d="M1138 807.7H1595" stroke="#d6485c" stroke-width="1.8"/>
<circle cx="1402.3" cy="807.7" r="4.2" fill="#5794f2" fill-opacity=".85"/>
<text class="y" x="1133.3" y="799">300 GB</text><text class="y" x="1133.3" y="818.3">250 GB</text><text class="y" x="1133.3" y="836.3">200 GB</text>
</svg>
</body></html>
